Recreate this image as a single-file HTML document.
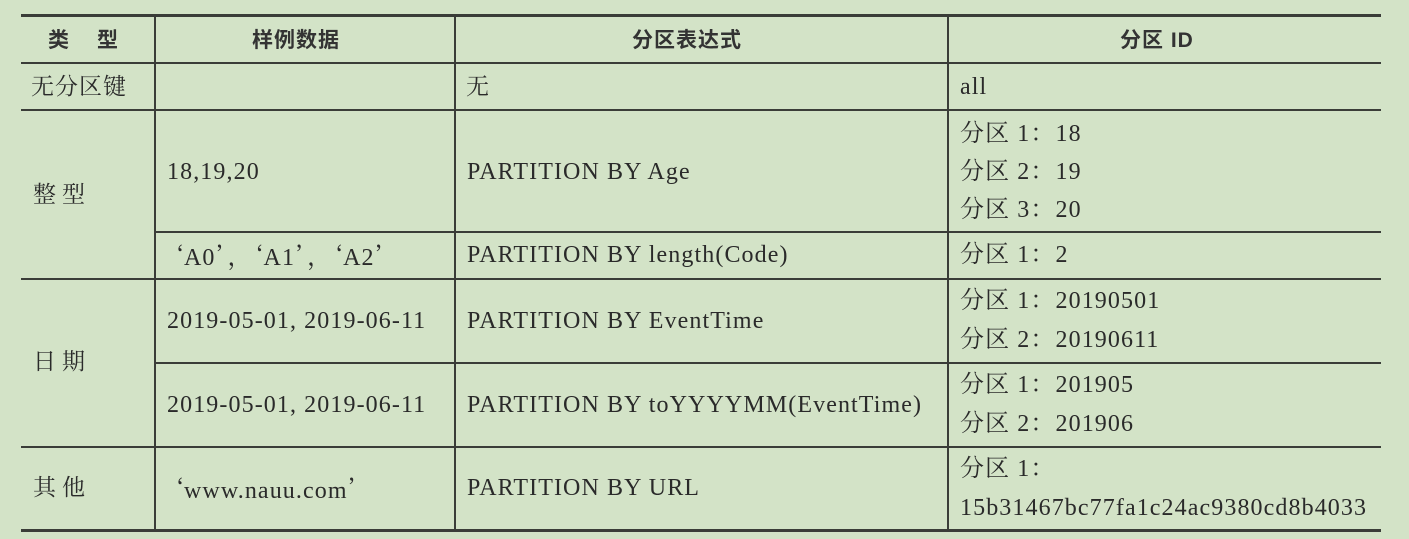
<!DOCTYPE html>
<html><head><meta charset="utf-8"><style>
body{margin:0;width:1409px;height:539px;background:#d3e3c7;position:relative;overflow:hidden;font-family:"Liberation Serif","Noto Serif CJK SC",serif;color:#2a2a2a;font-size:24px;letter-spacing:1.1px}
.h{position:absolute;height:2px;background:#3a3d38}
.v{position:absolute;width:2px;background:#3a3d38}
.t{position:absolute;white-space:nowrap;line-height:38px}
.hd{font-family:"Liberation Sans","Noto Sans CJK SC",sans-serif;font-weight:bold;font-size:21px;color:#333;letter-spacing:1px}
.q{font-family:"Noto Serif CJK SC",serif;letter-spacing:0}
.c{font-size:23px}
</style></head><body>
<div class="h" style="left:21px;width:1360px;top:14px;height:3px"></div>
<div class="h" style="left:21px;width:1360px;top:62px"></div>
<div class="h" style="left:21px;width:1360px;top:109px"></div>
<div class="h" style="left:155px;width:1226px;top:231px"></div>
<div class="h" style="left:21px;width:1360px;top:278px"></div>
<div class="h" style="left:155px;width:1226px;top:362px"></div>
<div class="h" style="left:21px;width:1360px;top:446px"></div>
<div class="h" style="left:21px;width:1360px;top:529px;height:3px"></div>
<div class="v" style="left:154px;top:15px;height:516px"></div>
<div class="v" style="left:454px;top:15px;height:516px"></div>
<div class="v" style="left:947px;top:15px;height:516px"></div>

<div class="t hd" style="left:48px;top:22px;letter-spacing:28px">类型</div>
<div class="t hd" style="left:252px;top:22px">样例数据</div>
<div class="t hd" style="left:632px;top:22px">分区表达式</div>
<div class="t hd" style="left:1120px;top:22px">分区 ID</div>

<div class="t c" style="left:31px;top:68px;letter-spacing:1px">无分区键</div>
<div class="t c" style="left:466px;top:68px">无</div>
<div class="t" style="left:960px;top:68px">all</div>

<div class="t c" style="left:33px;top:176px;letter-spacing:6px">整型</div>
<div class="t" style="left:167px;top:153px">18,19,20</div>
<div class="t" style="left:467px;top:153px">PARTITION BY Age</div>
<div class="t" style="left:960px;top:115px">分区 1：18</div>
<div class="t" style="left:960px;top:153px">分区 2：19</div>
<div class="t" style="left:960px;top:191px">分区 3：20</div>
<div class="t" style="left:160px;top:236px"><span class="q">‘</span>A0<span class="q">’，‘</span>A1<span class="q">’，‘</span>A2<span class="q">’</span></div>
<div class="t" style="left:467px;top:236px">PARTITION BY length(Code)</div>
<div class="t" style="left:960px;top:236px">分区 1：2</div>

<div class="t c" style="left:33px;top:343px;letter-spacing:6px">日期</div>
<div class="t" style="left:167px;top:302px">2019-05-01, 2019-06-11</div>
<div class="t" style="left:467px;top:302px">PARTITION BY EventTime</div>
<div class="t" style="left:960px;top:282px">分区 1：20190501</div>
<div class="t" style="left:960px;top:321px">分区 2：20190611</div>
<div class="t" style="left:167px;top:386px">2019-05-01, 2019-06-11</div>
<div class="t" style="left:467px;top:386px">PARTITION BY toYYYYMM(EventTime)</div>
<div class="t" style="left:960px;top:366px">分区 1：201905</div>
<div class="t" style="left:960px;top:405px">分区 2：201906</div>

<div class="t c" style="left:33px;top:469px;letter-spacing:6px">其他</div>
<div class="t" style="left:160px;top:469px"><span class="q">‘</span>www.nauu.com<span class="q">’</span></div>
<div class="t" style="left:467px;top:469px">PARTITION BY URL</div>
<div class="t" style="left:960px;top:450px">分区 1：</div>
<div class="t" style="left:960px;top:489px">15b31467bc77fa1c24ac9380cd8b4033</div>
</body></html>
